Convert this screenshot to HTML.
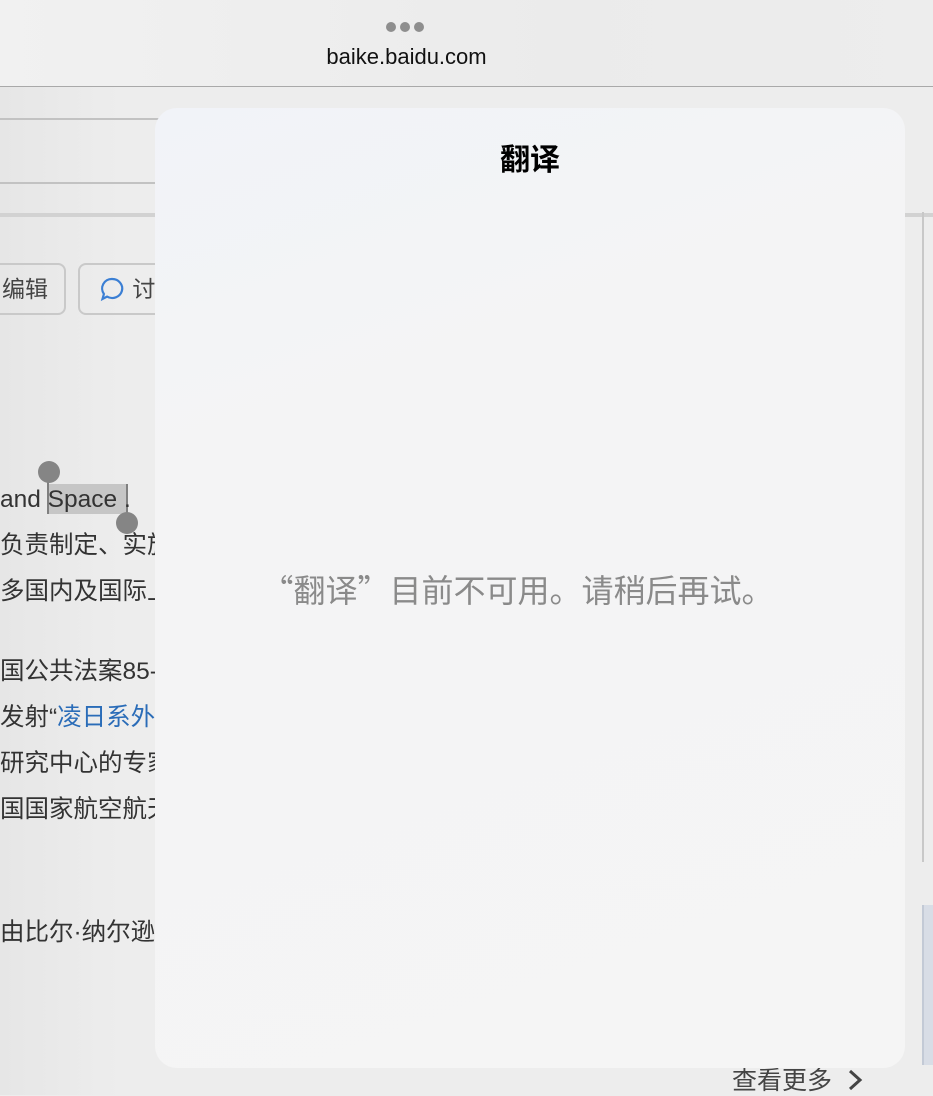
<!DOCTYPE html>
<html><head><meta charset="utf-8"><style>
html,body{margin:0;padding:0;width:933px;height:1095px;overflow:hidden;background:#ededed;font-family:"Liberation Sans","Noto Sans CJK SC",sans-serif;}
.top{position:absolute;left:0;top:0;width:933px;height:86px;background:linear-gradient(90deg,#f1f1f1,#ebebeb 60%,#ededed);border-bottom:1px solid #a9a9a9;}
.dots{position:absolute;left:386px;top:19px;}
.dots span{display:inline-block;width:10px;height:10px;border-radius:50%;background:#8e8e8e;margin-right:4px;}
.url{position:absolute;left:0;width:813px;top:44px;text-align:center;font-size:22px;color:#111;}
.page{position:absolute;left:0;top:87px;width:933px;height:1008px;background:linear-gradient(90deg,#e6e6e6,#ededed 120px);}
.sline{position:absolute;left:0;width:160px;height:2px;background:#c2c2c2;}
.band{position:absolute;left:0;top:213px;width:933px;height:4px;background:#d2d2d2;}
.btn{position:absolute;top:263px;height:52px;border:2px solid #c9c9c9;border-radius:8px;box-sizing:border-box;font-size:23px;color:#444;line-height:48px;white-space:nowrap;overflow:hidden;}
.t{position:absolute;left:0;font-size:24.5px;color:#333;white-space:nowrap;line-height:30px;}
.card{position:absolute;left:155px;top:108px;width:750px;height:960px;border-radius:22px;background:linear-gradient(160deg,#f1f3f8 0%,#f4f4f5 30%,#f5f5f5 100%);}
.title{position:absolute;left:0;width:750px;top:27px;text-align:center;font-size:30px;font-weight:bold;color:#000;}
.msg{position:absolute;left:0;width:725px;top:458px;text-align:center;font-size:32px;color:#8a8a8a;font-family:"Noto Sans CJK SC",sans-serif;white-space:nowrap;}
</style></head><body>
<div class="top"><div class="dots"><span></span><span></span><span></span></div><div class="url">baike.baidu.com</div></div>
<div class="page"></div>
<div class="sline" style="top:118px"></div>
<div class="sline" style="top:182px"></div>
<div class="band"></div>
<div style="position:absolute;left:922px;top:212px;width:2px;height:650px;background:#c8c8c8"></div>
<div style="position:absolute;left:922px;top:905px;width:11px;height:160px;background:#d8dde6;border-left:2px solid #c3cad6"></div>
<div class="btn" style="left:-10px;width:76px;padding-left:10px">编辑</div>
<div class="btn" style="left:78px;width:100px;padding-left:18px"><svg width="28" height="28" viewBox="0 0 28 28" style="vertical-align:-6px"><path d="M14 4a10 9.5 0 1 1-5 17.6L4.5 24l1.4-5A9.5 9.5 0 0 1 14 4z" fill="none" stroke="#3b7fd4" stroke-width="2.2"/></svg> 讨论</div>
<div style="position:absolute;left:48px;top:484px;width:80px;height:30px;background:#c6c6c6"></div>
<div style="position:absolute;left:47px;top:470px;width:2px;height:44px;background:#808080"></div>
<div style="position:absolute;left:126px;top:484px;width:2px;height:40px;background:#808080"></div>
<div style="position:absolute;left:38px;top:461px;width:22px;height:22px;border-radius:50%;background:#858585"></div>
<div style="position:absolute;left:116px;top:512px;width:22px;height:22px;border-radius:50%;background:#858585"></div>
<div class="t" style="top:485px">and Space .</div>
<div class="t" style="top:531px">负责制定、实施</div>
<div class="t" style="top:577px">多国内及国际上</div>
<div class="t" style="top:657px">国公共法案85-</div>
<div class="t" style="top:703px">发射“<span style="color:#2a6cb8">凌日系外</span></div>
<div class="t" style="top:749px">研究中心的专家</div>
<div class="t" style="top:795px">国国家航空航天</div>
<div class="t" style="top:918px">由比尔·纳尔逊</div>
<div class="t" style="left:732px;top:1066px;font-size:25px;color:#444">查看更多 &nbsp;<svg width="18" height="24" viewBox="0 0 18 24" style="vertical-align:-3px"><path d="M4 3l10 9-10 9" fill="none" stroke="#444" stroke-width="3"/></svg></div>
<div class="card"><div class="title">翻译</div><div class="msg">“翻译”目前不可用。请稍后再试。</div></div>
</body></html>
